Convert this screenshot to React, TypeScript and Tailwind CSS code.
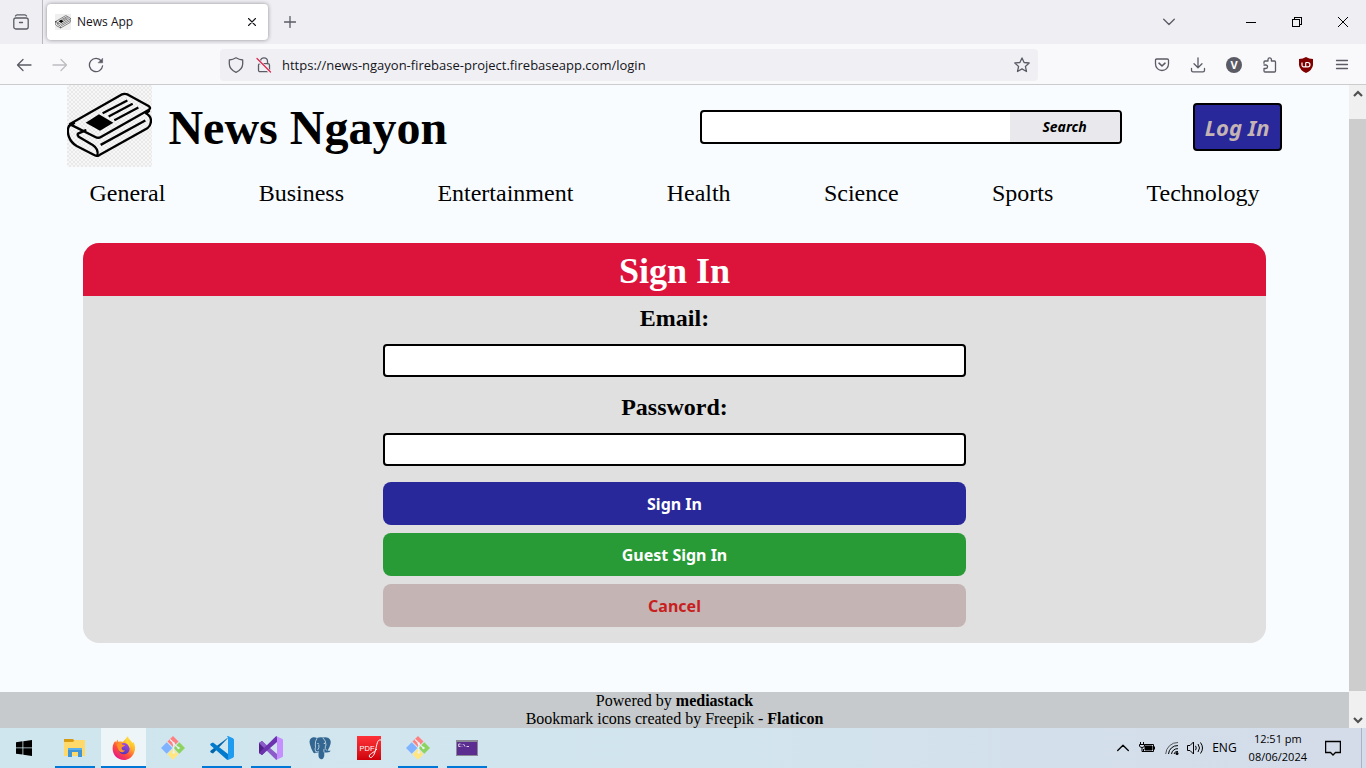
import React from "react";

const UI = "font-['Open_Sans','Noto_Sans',sans-serif]";

type IconProps = { children: React.ReactNode; box?: string; className?: string };

function Line({ children, box = "0 0 16 16", className = "size-4" }: IconProps) {
  return (
    <svg
      viewBox={box}
      className={className}
      fill="none"
      stroke="currentColor"
      strokeWidth="1.3"
      strokeLinecap="round"
      strokeLinejoin="round"
      aria-hidden="true"
    >
      {children}
    </svg>
  );
}

function Newspaper({ className }: { className: string }) {
  return (
    <svg viewBox="51 15 255 246" className={className} preserveAspectRatio="none" aria-hidden="true">
      <g fill="none" stroke="#000" strokeWidth="7" strokeLinecap="round" strokeLinejoin="round">
        <path d="M72 130 57 138M60 132 214 44Q224 39 234 44L297 79Q303 84 297 89L154 170Q145 176 136 171L62 134" />
        <path d="M57 138Q50 152 57 171Q64 189 80 198L134 226Q140 229 147 226L292 145Q303 137 303 121Q302 108 288 100L297 93" />
        <path d="M106 151 84 161Q81 164 86 170L128 195Q147 207 142 227" />
        <path d="M155 193 283 123M161 98 229 63M179 108 245 73M196 119 262 84" strokeLinecap="square" />
      </g>
      <path d="M107 128 147 103 190 128 150 152Z" />
    </svg>
  );
}

function TabStrip() {
  return (
    <div className="flex h-11 items-center bg-[#efeef3] text-[#5b5b66]">
      <button aria-label="Recent browsing" className="flex h-11 w-[43px] items-center justify-center border-r border-[#b9b9be]">
        <Line className="size-4">
          <path d="M2.5 2Q3 .8 4.2 .8H11.8Q13 .8 13.5 2" />
          <rect x=".8" y="4" width="14.4" height="11" rx="2" />
          <path d="M6.5 8.5H9.5" />
        </Line>
      </button>
      <div className="ml-1 flex h-9 w-[221px] items-center rounded bg-white px-2 shadow-[0_0_4px_rgba(0,0,0,0.4)]">
        <span className="size-4 bg-[#efefef]">
          <Newspaper className="size-4" />
        </span>
        <span className="ml-1.5 flex-1 text-xs text-[#15141a]">News App</span>
        <button aria-label="Close tab" className="p-1 text-[#15141a]">
          <Line className="size-2" box="0 0 8 8">
            <path d="M.5 .5 7.5 7.5M7.5 .5 .5 7.5" strokeWidth="1.1" />
          </Line>
        </button>
      </div>
      <button aria-label="New tab" className="ml-4">
        <Line className="size-3" box="0 0 12 12">
          <path d="M6 .5V11.5M.5 6H11.5" />
        </Line>
      </button>
      <div className="ml-auto flex items-center text-black">
        <button aria-label="List all tabs" className="mr-9 flex w-[46px] justify-center text-[#5b5b66]">
          <Line className="h-2 w-3" box="0 0 12 8">
            <path d="M.7 1.2 6 6.5 11.3 1.2" />
          </Line>
        </button>
        <button aria-label="Minimize" className="flex w-[46px] justify-center">
          <span className="h-px w-2.5 bg-black" />
        </button>
        <button aria-label="Restore" className="flex w-[46px] justify-center">
          <svg viewBox="0 0 10 10" className="size-2.5" fill="none" stroke="#000" shapeRendering="crispEdges">
            <path d="M.5 2.5H7.5V9.5H.5ZM2.5 2.5V.5H9.5V7.5H7.5" />
          </svg>
        </button>
        <button aria-label="Close" className="flex w-[46px] justify-center">
          <svg viewBox="0 0 10 10" className="size-2.5" fill="none" stroke="#000">
            <path d="M0 0 10 10M10 0 0 10" />
          </svg>
        </button>
      </div>
    </div>
  );
}

function Toolbar() {
  return (
    <div className="flex h-[41px] items-center border-b border-[#cccccf] bg-[#f9f9fb] pt-px text-[#5b5b66]">
      <div className="flex w-[220px] items-center gap-5 pl-4">
        <button aria-label="Back">
          <Line><path d="M1.5 8H15M7 2.5 1.5 8 7 13.5" /></Line>
        </button>
        <button aria-label="Forward" className="text-[#bdbdc2]">
          <Line><path d="M14.5 8H1M9 2.5 14.5 8 9 13.5" /></Line>
        </button>
        <button aria-label="Reload">
          <Line>
            <path d="M13.4 4.2A6.6 6.6 0 1 0 14.6 8.8" />
            <path d="M14.6 1.6V5.8H10.4Z" fill="currentColor" strokeWidth=".6" />
          </Line>
        </button>
      </div>
      <div className="flex h-8 flex-1 items-center rounded bg-[#f0f0f4] px-2">
        <button aria-label="Tracking protection">
          <Line><path d="M8 .8Q11 2.6 14.7 3V7Q14.5 12.5 8 15.3Q1.5 12.5 1.3 7V3Q5 2.6 8 .8Z" /></Line>
        </button>
        <button aria-label="Connection not secure" className="ml-3">
          <Line>
            <path d="M4.5 6.5V4.3A3.5 3.5 0 0 1 11.5 4.3V6.5" />
            <rect x="2.5" y="6.7" width="11" height="8" rx="1.5" />
            <path d="M1 2 14.5 15.5" stroke="#f0f0f4" strokeWidth="3" />
            <path d="M1 1.5 14.5 15" stroke="#e22850" />
          </Line>
        </button>
        <input
          aria-label="Address"
          defaultValue="https://news-ngayon-firebase-project.firebaseapp.com/login"
          className="ml-2.5 min-w-0 flex-1 bg-transparent pt-0.5 text-[13px] text-[#15141a] outline-none"
        />
        <button aria-label="Bookmark this page">
          <Line><path d="M8 .9 10.1 5.5 15.2 6 11.4 9.4 12.5 14.5 8 11.9 3.5 14.5 4.6 9.4 .8 6 5.9 5.5Z" /></Line>
        </button>
      </div>
      <div className="flex w-[328px] items-center justify-end gap-5 pr-4">
        <button aria-label="Save to Pocket">
          <Line>
            <path d="M2.8 2H13.2Q14.5 2 14.5 3.3V7A6.5 6.5 0 0 1 1.5 7V3.3Q1.5 2 2.8 2Z" />
            <path d="M5 6.2 8 9 11 6.2" strokeWidth="1.6" />
          </Line>
        </button>
        <button aria-label="Downloads">
          <Line><path d="M8 .8V10.5M4 6.7 8 10.7 12 6.7M1.5 11.5V13.2Q1.5 14.8 3 14.8H13Q14.5 14.8 14.5 13.2V11.5" /></Line>
        </button>
        <button aria-label="Account" className="flex size-4 items-center justify-center rounded-full bg-[#5b5b66] text-[11px] font-bold leading-4 text-white">
          V
        </button>
        <button aria-label="Extensions">
          <Line><path d="M2 6.3V5Q2 4 3 4H6V2.5A1.7 1.7 0 0 1 9.4 2.5V4H12.5Q13.5 4 13.5 5V14Q13.5 15 12.5 15H3Q2 15 2 14V11.5H3.8A1.7 1.7 0 0 0 3.8 8H2" /></Line>
        </button>
        <button aria-label="uBlock Origin">
          <svg viewBox="0 0 16 16" className="size-4" aria-hidden="true">
            <path d="M8 0Q11 1.8 15 2V8Q14.5 13 8 16Q1.5 13 1 8V2Q5 1.8 8 0Z" fill="#800000" />
            <path d="M4 5.5V8.3Q4 9.8 5.5 9.8H7.7V5.5M7.7 5.5H9.8A2.1 2.1 0 0 1 9.8 9.8H7.7" fill="none" stroke="#fff" strokeWidth="1.2" />
          </svg>
        </button>
        <button aria-label="Open application menu">
          <Line><path d="M2.5 3.5H13.5M2.5 7.5H13.5M2.5 11.5H13.5" /></Line>
        </button>
      </div>
    </div>
  );
}

const categories = ["General", "Business", "Entertainment", "Health", "Science", "Sports", "Technology"];

function SiteHeader() {
  return (
    <header className="px-[5%]">
      <div className="flex h-[84px] items-center">
        <a href="#home" className="flex h-full items-center gap-4">
          <span className="h-[82px] w-[85px] self-start bg-[#f1f1f1] bg-[repeating-conic-gradient(#e9e9e9_0_25%,#f7f7f7_0_50%)] bg-[size:4px_4px]">
            <Newspaper className="size-full" />
          </span>
          <h1 className="pt-0.5 text-5xl font-bold">News Ngayon</h1>
        </a>
        <form className="ml-auto flex h-[34px] w-[422px] overflow-hidden rounded border-2 border-black bg-white" onSubmit={(e) => e.preventDefault()}>
          <input aria-label="Search news" className="min-w-0 flex-1 px-2 outline-none" />
          <button className="w-[110px] bg-[#e9e9ed] font-['Noto_Sans',sans-serif] text-sm leading-5 font-bold italic">Search</button>
        </form>
        <button className="ml-[71px] h-12 w-[89px] rounded border-2 border-black bg-[#28289a] font-['Noto_Sans',sans-serif] text-[22px] leading-7 font-bold italic text-[#c4b4b4]">
          Log In
        </button>
      </div>
      <nav className="flex justify-between px-[22px] pt-2.5 text-2xl leading-7">
        {categories.map((c) => (
          <a key={c} href={`#${c.toLowerCase()}`}>{c}</a>
        ))}
      </nav>
    </header>
  );
}

function Field({ id, label, type }: { id: string; label: string; type: string }) {
  return (
    <div className="flex flex-col items-stretch gap-3">
      <label htmlFor={id} className="text-center text-2xl font-bold leading-7">{label}</label>
      <input id={id} type={type} className="h-[33px] rounded border-2 border-black bg-white px-2 outline-none" />
    </div>
  );
}

function SignIn() {
  const button = "h-[43px] rounded-lg font-['Noto_Sans',sans-serif] text-base font-bold";
  return (
    <section className="mx-[83px] mt-9 overflow-hidden rounded-2xl bg-[#e0e0e0]">
      <h2 className="bg-[#dc143c] pt-2 pb-1 text-center text-4xl font-bold leading-[41px] text-white">Sign In</h2>
      <form className="mx-auto flex w-[583px] flex-col gap-4 pt-2 pb-4" onSubmit={(e) => e.preventDefault()}>
        <Field id="email" label="Email:" type="email" />
        <Field id="password" label="Password:" type="password" />
        <div className="flex flex-col gap-2">
          <button className={`${button} bg-[#28289a] text-white`}>Sign In</button>
          <button type="button" className={`${button} bg-[#289a36] text-white`}>Guest Sign In</button>
          <button type="button" className={`${button} bg-[#c4b4b4] text-[#c81e1e]`}>Cancel</button>
        </div>
      </form>
    </section>
  );
}

function ScrollBar() {
  return (
    <div className="flex w-[17px] shrink-0 flex-col bg-[#f0f0f0] text-[#505050]" aria-hidden="true">
      <div className="flex h-[17px] items-center justify-center">
        <Line className="h-2 w-2.5" box="0 0 10 8"><path d="M1 6 5 2 9 6" strokeWidth="2.2" strokeLinecap="butt" strokeLinejoin="miter" /></Line>
      </div>
      <div className="mt-[17px] mb-5 flex-1 bg-[#cdcdcd]" />
      <div className="flex h-[17px] items-center justify-center">
        <Line className="h-2 w-2.5" box="0 0 10 8"><path d="M1 2 5 6 9 2" strokeWidth="2.2" strokeLinecap="butt" strokeLinejoin="miter" /></Line>
      </div>
    </div>
  );
}

function FolderIcon() {
  return (
    <svg viewBox="0 0 24 24" className="size-6">
      <path d="M1 3H10L12 5H22V10H1Z" fill="#e0a020" />
      <path d="M1 6H10L12 4H22V20H1Z" fill="#ffd96a" />
      <path d="M1 3H10V5.5H1Z" fill="#d79b12" />
      <path d="M5 12H19V21H15V16H9V21H5Z" fill="#3f95d6" />
      <path d="M5 12H19V14H5Z" fill="#5ab0ea" />
    </svg>
  );
}

function FirefoxIcon() {
  return (
    <svg viewBox="0 0 24 24" className="size-6">
      <defs>
        <linearGradient id="ffOuter" x1=".85" y1=".05" x2=".2" y2=".95">
          <stop offset="0" stopColor="#fff044" />
          <stop offset=".35" stopColor="#ffb02a" />
          <stop offset=".65" stopColor="#ff4f3a" />
          <stop offset="1" stopColor="#e5158b" />
        </linearGradient>
        <linearGradient id="ffCore" x1=".7" y1="0" x2=".3" y2="1">
          <stop offset="0" stopColor="#a04bea" />
          <stop offset="1" stopColor="#4f33b5" />
        </linearGradient>
      </defs>
      <path d="M16 0C16 3 19 4 20.5 7L21.5 6C23.3 9 23.8 13 22 17C20 21.5 16 24 12 24C5.5 24 .6 19 .6 12.5C.6 9 2 6.5 3.3 5L4 6.5L5.5 3.5L6.6 6C8 5.3 9.5 5.5 10.5 6C12 5 13.5 3 16 0Z" fill="url(#ffOuter)" />
      <circle cx="12" cy="12.7" r="5.6" fill="url(#ffCore)" />
      <path d="M4.5 8.5C7 6.5 9.5 7.2 10.5 8.7L13 9C12.5 10.5 10.5 10.5 9.7 11.5C9.2 13 10.5 15 13 14.5C11 17.5 6.5 16.5 6 12.5Z" fill="#ff9227" />
      <path d="M14 3C18 5 19 9 17.5 12L16 8.5C14 7 12.5 5.5 14 3Z" fill="#ffd638" />
    </svg>
  );
}

function GitIcon() {
  return (
    <svg viewBox="0 0 24 24" className="size-6">
      <path d="M12 0 17.5 5.5 12 11 6.5 5.5Z" fill="#ff8080" />
      <path d="M5.7 6.3 11.4 12 5.7 17.7 0 12Z" fill="#80b3ff" />
      <path d="M18.3 6.3 24 12 18.3 17.7 12.6 12Z" fill="#8dd35f" />
      <path d="M12 12.7 17.5 18.2 12 23.7 6.5 18.2Z" fill="#ffe680" />
      <path d="M9 3.500 12.700 7V17M13 8 17.500 12" fill="none" stroke="#e7f2f5" strokeWidth="1.1" />
      <circle cx="12.7" cy="7.5" r="1.2" fill="#e7f2f5" />
      <circle cx="12.7" cy="16.5" r="1.2" fill="#e7f2f5" />
      <circle cx="17.5" cy="12" r="1.2" fill="#e7f2f5" />
    </svg>
  );
}

function CodeIcon() {
  return (
    <svg viewBox="0 0 24 24" className="size-6">
      <path d="M18 0 3 15.5 .8 14.5Q-.3 13.5 .8 12.5L17 .3Z" fill="#0065a9" transform="translate(0 2)" />
      <path d="M.8 9.5Q-.3 8.5 .8 7.5L3 6.5 18 18V24L17 23.7Z" fill="#007acc" />
      <path d="M17 0 18 0 23 2.3Q24 3 24 4V20Q24 21 23 21.7L18 24 17 23.7 18 22V2Z" fill="#1f9cf0" />
    </svg>
  );
}

function StudioIcon() {
  return (
    <svg viewBox="0 0 24 24" className="size-6">
      <path d="M0 7 3 5 6 8V16L3 19 0 17Z" fill="#52218a" />
      <path d="M0 7 3 5 18 18V24L17 23.7Z" fill="#8a5bc9" />
      <path d="M0 17 3 19 18 6V0L17 .3Z" fill="#6c33af" />
      <path d="M17 0 23.5 3Q24 3.3 24 4V20Q24 20.7 23.5 21L17 24Q18 23.5 18 22V2Q18 .5 17 0Z" fill="#c58fff" />
    </svg>
  );
}

function ElephantIcon() {
  return (
    <svg viewBox="0 0 24 24" className="size-6">
      <path
        d="M5 1.300Q7 1 9 2Q12 .6 15 1.500Q18 .6 20.500 2Q23.500 4 22.500 8Q21.700 11.500 19.700 14.500Q21.500 15 22.800 14.500Q22.300 16.300 19 16.500H16.300Q16.600 20 15.500 22Q14.300 23.700 12.500 23Q10.700 22.500 10.500 20V16Q9 17.500 8 16.500Q6.700 18 5.300 16.500Q3.300 13.500 2 8.500Q.3 2.500 5 1.300Z"
        fill="#336791"
      />
      <path
        d="M9 2.300Q7 5 7.300 9Q8 11.500 7 13Q7.300 15.500 8.300 16M9.700 14Q11.500 12 10.800 8.500M15 2Q18 4.500 18 9Q16.800 11 17.300 12.500L18.800 14.500M10.700 15.500Q9 16.500 8 15.500M16.200 16.500Q15.500 15 16 13"
        fill="none"
        stroke="#d2e5ee"
        strokeWidth=".8"
      />
      <circle cx="10" cy="7.500" r=".6" fill="#fff" />
      <circle cx="16.300" cy="7.300" r=".6" fill="#fff" />
    </svg>
  );
}

function PdfIcon() {
  return (
    <span className="flex size-6 bg-linear-to-b from-[#ff3038] to-[#cf0008]">
      <svg viewBox="0 0 24 24" className="size-6">
        <text x="2.5" y="14.5" fontSize="7.5" fill="#fff" fontFamily="Liberation Sans">PDF</text>
        <path d="M24 4C20 3 20 9 18.5 14C17.5 19 14.5 23 12.5 21C11 18 17 17 20 13" fill="none" stroke="#fff" strokeWidth="1" />
      </svg>
    </span>
  );
}

function TerminalIcon() {
  return (
    <svg viewBox="0 0 24 24" className="size-6">
      <rect x="1" y="4" width="22" height="16" fill="#8a8a96" />
      <rect x="2" y="6" width="20" height="13" fill="#5c2d91" />
      <path d="M5.5 8H3.7V10.5H5.5M7 8.5V9M7 10V10.5M8.5 8 10 10.5M11.5 10.5H14" fill="none" stroke="#e6dcf2" strokeWidth=".9" />
    </svg>
  );
}

const apps = [
  { name: "File Explorer", icon: <FolderIcon />, state: "open" },
  { name: "Firefox", icon: <FirefoxIcon />, state: "active" },
  { name: "Git GUI", icon: <GitIcon />, state: "" },
  { name: "Visual Studio Code", icon: <CodeIcon />, state: "open" },
  { name: "Visual Studio", icon: <StudioIcon />, state: "open" },
  { name: "PostgreSQL", icon: <ElephantIcon />, state: "" },
  { name: "PDF reader", icon: <PdfIcon />, state: "" },
  { name: "Git Bash", icon: <GitIcon />, state: "open" },
  { name: "Command Prompt", icon: <TerminalIcon />, state: "open" },
];

function Taskbar() {
  return (
    <footer className={`flex h-10 items-stretch bg-linear-to-r from-[#cfe6ee] via-[#d2e5ee] to-[#d4dbe9] text-black ${UI}`}>
      <button aria-label="Start" className="flex w-[50px] items-center justify-center pr-0.5">
        <svg viewBox="0 0 16 16" className="size-4">
          <path d="M0 2.2 6.5 1.3V7.5H0ZM7.3 1.2 16 0V7.5H7.3ZM0 8.3H6.5V14.6L0 13.7ZM7.3 8.3H16V16L7.3 14.7Z" />
        </svg>
      </button>
      {apps.map((app) => (
        <button
          key={app.name}
          aria-label={app.name}
          className={`flex w-[49px] flex-col items-center ${app.state === "active" ? "border-x-2 border-x-transparent bg-[#edf5f9] bg-clip-padding" : ""}`}
        >
          <span className="flex flex-1 items-center pt-0.5">{app.icon}</span>
          <span className={`h-0.5 ${app.state === "active" ? "w-full bg-[#0078d7]" : app.state === "open" ? "w-10 bg-[#0078d7]" : "w-10"}`} />
        </button>
      ))}
      <div className="ml-auto flex items-center">
        <button aria-label="Show hidden icons" className="mr-2.5">
          <Line className="h-2 w-3" box="0 0 12 8"><path d="M.7 6.5 6 1.2 11.3 6.5" /></Line>
        </button>
        <svg viewBox="0 0 16 16" className="mr-2.5 size-4" fill="none" stroke="#000">
          <path d="M5.5 4.5H14.5V11.5H4.5V9" />
          <path d="M15.5 6.5V9.5" />
          <path d="M6 6H13V10H6Z" fill="#000" />
          <path d="M1.5 2V4M4.5 2V4M.5 4.5H5.5V6Q5 7.5 3 7.5Q1 7.5 .5 6ZM3 7.5V11.5H5" />
        </svg>
        <svg viewBox="0 0 14 14" className="mr-2 size-3.5" fill="none" stroke="#000">
          <path d="M.7 13A12 12 0 0 1 13 1.5" stroke="#555" />
          <path d="M3.5 13A9 9 0 0 1 13 4.6M6.500 13A6 6 0 0 1 13 7.7M9 13A3.5 3.5 0 0 1 13 10.5" />
          <circle cx="12" cy="12.5" r="1.5" fill="#000" stroke="none" />
        </svg>
        <svg viewBox="0 0 17 14" className="mr-2 h-3.5 w-[17px]" fill="none" stroke="#000">
          <path d="M.5 4.5H3L6.5 1V13L3 9.5H.5Z" />
          <path d="M8.5 4.8Q10 7 8.5 9.2M11 3Q14 7 11 11M13.5 1.5Q17.5 7 13.5 12.5" />
        </svg>
        <span className="text-xs">ENG</span>
        <span className="ml-3 text-center text-[11px] leading-[18px]">
          12:51 pm
          <br />
          08/06/2024
        </span>
        <button aria-label="Notifications" className="ml-[18px] mr-5">
          <Line className="size-4"><path d="M.6 1.5H15.4V12.5H10.5L8 15 5.5 12.5H.6Z" strokeLinejoin="miter" /></Line>
        </button>
      </div>
      <div className="w-[5px] border-l border-[#a9b4c4]" />
    </footer>
  );
}

export default function App() {
  return (
    <div className="flex min-h-screen flex-col">
      <div className={UI}>
        <TabStrip />
        <Toolbar />
      </div>
      <div className="flex flex-1">
        <div className="flex flex-1 flex-col bg-[#f9fcff] font-['Liberation_Serif',serif] text-black">
          <SiteHeader />
          <main className="flex-1">
            <SignIn />
          </main>
          <div className="bg-[#c6cacc] text-center text-base leading-[18px]">
            <p>Powered by <a href="#mediastack" className="font-bold">mediastack</a></p>
            <p>Bookmark icons created by Freepik - <a href="#flaticon" className="font-bold">Flaticon</a></p>
          </div>
        </div>
        <ScrollBar />
      </div>
      <Taskbar />
    </div>
  );
}
